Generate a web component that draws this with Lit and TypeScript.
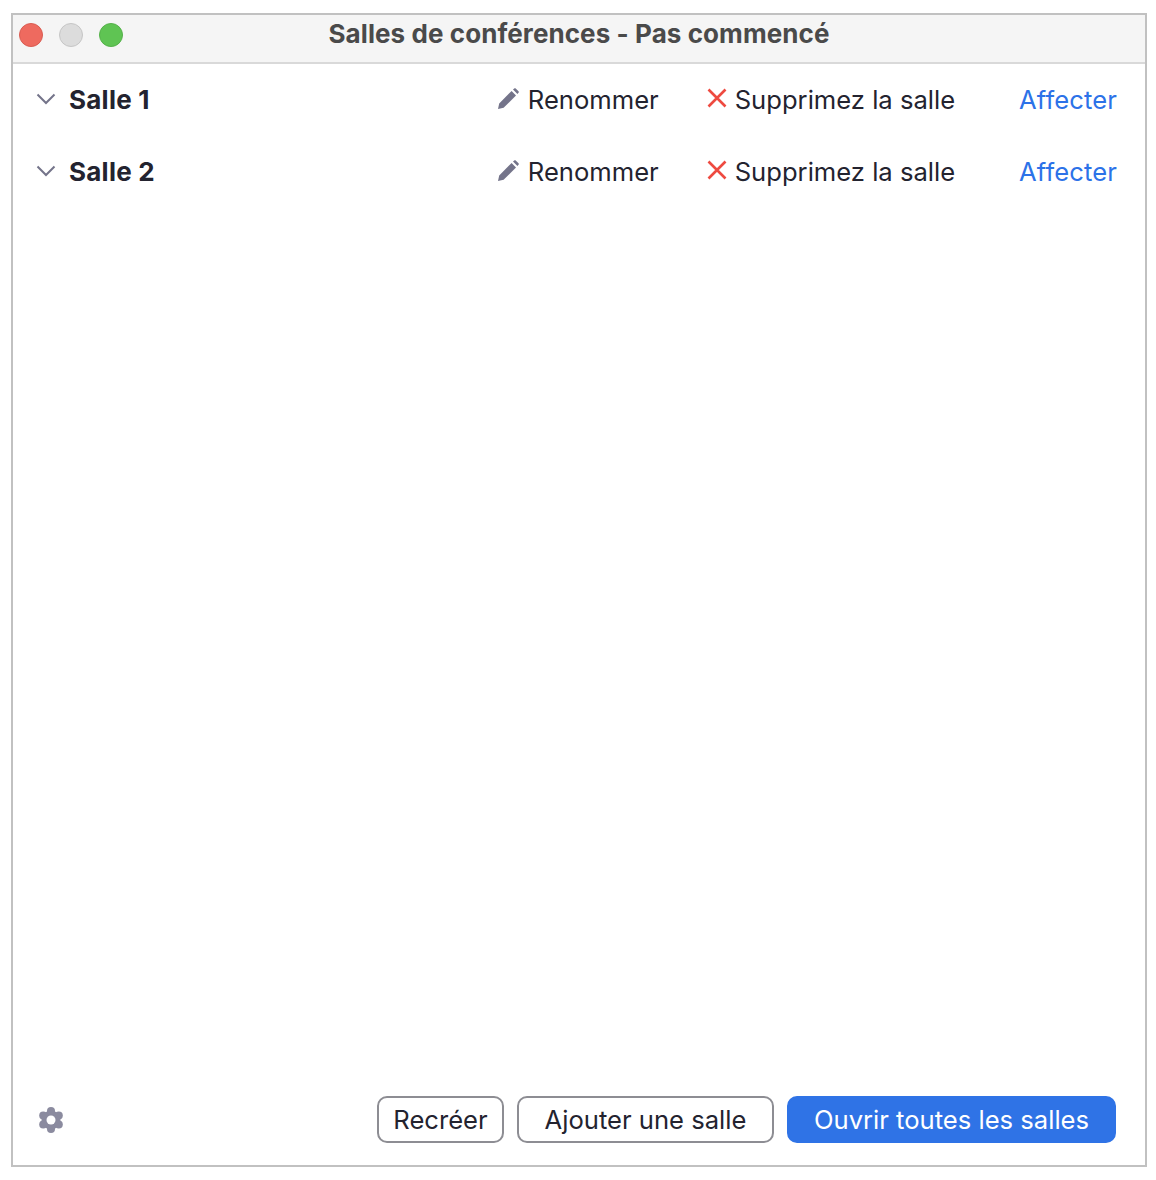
import { LitElement, html, css } from "lit";
import { customElement } from "lit/decorators.js";

@customElement("app-root")
export class AppRoot extends LitElement {
  static styles = css`
    :host { display: block; width: 1156px; height: 1180px; background: #fff; font-family: Inter, "Liberation Sans", sans-serif; color: #23232f; }
    .page { padding: 13px 9px 13px 11px; box-sizing: border-box; height: 1180px; }
    .win { height: 100%; box-sizing: border-box; border: 2px solid #c1c1c1; display: flex; flex-direction: column; background: #fff; }
    .title { height: 49px; box-sizing: border-box; flex: none; background: #f5f5f5; border-bottom: 2px solid #d9d9d9; position: relative; display: flex; align-items: center; justify-content: center; font-size: 26px; font-weight: 700; letter-spacing: 0.08px; color: #4a4a4a; padding-bottom: 11px; }
    .lights { position: absolute; left: 6px; top: 8px; display: flex; gap: 16px; }
    .light { width: 24px; height: 24px; border-radius: 50%; box-sizing: border-box; border: 1px solid; }
    .red { background: #ee6a5f; border-color: #d95c52; }
    .gray { background: #dcdcdc; border-color: #c6c6c6; }
    .green { background: #5fc453; border-color: #55b14a; }
    .rooms { flex: 1; }
    .row { height: 72px; box-sizing: border-box; display: flex; align-items: center; padding: 0 28px 1px 23px; font-size: 25.6px; }
    .chev { width: 20px; height: 12px; margin-right: 13px; flex: none; position: relative; top: -1px; }
    .name { font-weight: 700; flex: 1; font-size: 26px; letter-spacing: 0.25px; }
    .act { display: flex; align-items: center; }
    .pen { width: 22px; height: 22px; margin-right: 9px; position: relative; top: -1px; }
    .x { width: 20px; height: 20px; margin-right: 8px; position: relative; top: -2px; }
    .ren { margin-right: 48px; }
    .del { margin-right: 64px; }
    .link { color: #2c72e8; letter-spacing: 0.1px; }
    .foot { height: 69px; flex: none; display: flex; align-items: flex-start; padding: 0 29px 0 26px; box-sizing: border-box; }
    .gear { width: 24px; height: 26px; margin-top: 11px; flex: none; }
    .spacer { flex: 1; }
    .btn { height: 47px; box-sizing: border-box; border: 2px solid #8d8d93; border-radius: 10px; display: flex; align-items: center; justify-content: center; font-size: 25.6px; background: #fff; color: #23232f; }
    .b1 { width: 127px; margin-right: 13px; }
    .b2 { width: 257px; margin-right: 13px; }
    .b3 { width: 329px; background: #2f73e6; border-color: #2f73e6; color: #fff; }
  `;

  private row(n: string) {
    return html`<div class="row">
      <svg class="chev" viewBox="0 0 20 12"><path d="M1.5 1.5 10 10l8.5-8.5" fill="none" stroke="#74748a" stroke-width="2"/></svg>
      <span class="name">${n}</span>
      <span class="act ren">
        <svg class="pen" viewBox="0 0 22 22"><path d="M1 21l1.2-5.600L14.600 3l4.400 4.400L6.600 19.800zM16 1.600l1.200-1.100c.5-.4 1.100-.4 1.500 0l2.800 2.800c.4.400.4 1 0 1.500L20.400 6z" fill="#74748a"/></svg>
        Renommer
      </span>
      <span class="act del">
        <svg class="x" viewBox="0 0 20 20"><path d="M1.500 1.500l17 17M18.500 1.500l-17 17" fill="none" stroke="#ee4a40" stroke-width="2.600"/></svg>
        Supprimez la salle
      </span>
      <span class="link">Affecter</span>
    </div>`;
  }

  render() {
    return html`<div class="page"><div class="win">
      <div class="title">
        <div class="lights"><div class="light red"></div><div class="light gray"></div><div class="light green"></div></div>
        Salles de conférences - Pas commencé
      </div>
      <div class="rooms">${this.row("Salle 1")}${this.row("Salle 2")}</div>
      <div class="foot">
        <svg class="gear" viewBox="0 0 24 26" fill="#8b8b9f">
          <circle cx="12" cy="13" r="9.500"/>
          <circle cx="12" cy="4" r="4"/><circle cx="12" cy="22" r="4"/>
          <circle cx="4.200" cy="8.500" r="4"/><circle cx="19.800" cy="8.500" r="4"/>
          <circle cx="4.200" cy="17.500" r="4"/><circle cx="19.800" cy="17.500" r="4"/>
          <circle cx="12" cy="13" r="4.500" fill="#fff"/>
        </svg>
        <div class="spacer"></div>
        <div class="btn b1">Recréer</div>
        <div class="btn b2">Ajouter une salle</div>
        <div class="btn b3">Ouvrir toutes les salles</div>
      </div>
    </div></div>`;
  }
}
